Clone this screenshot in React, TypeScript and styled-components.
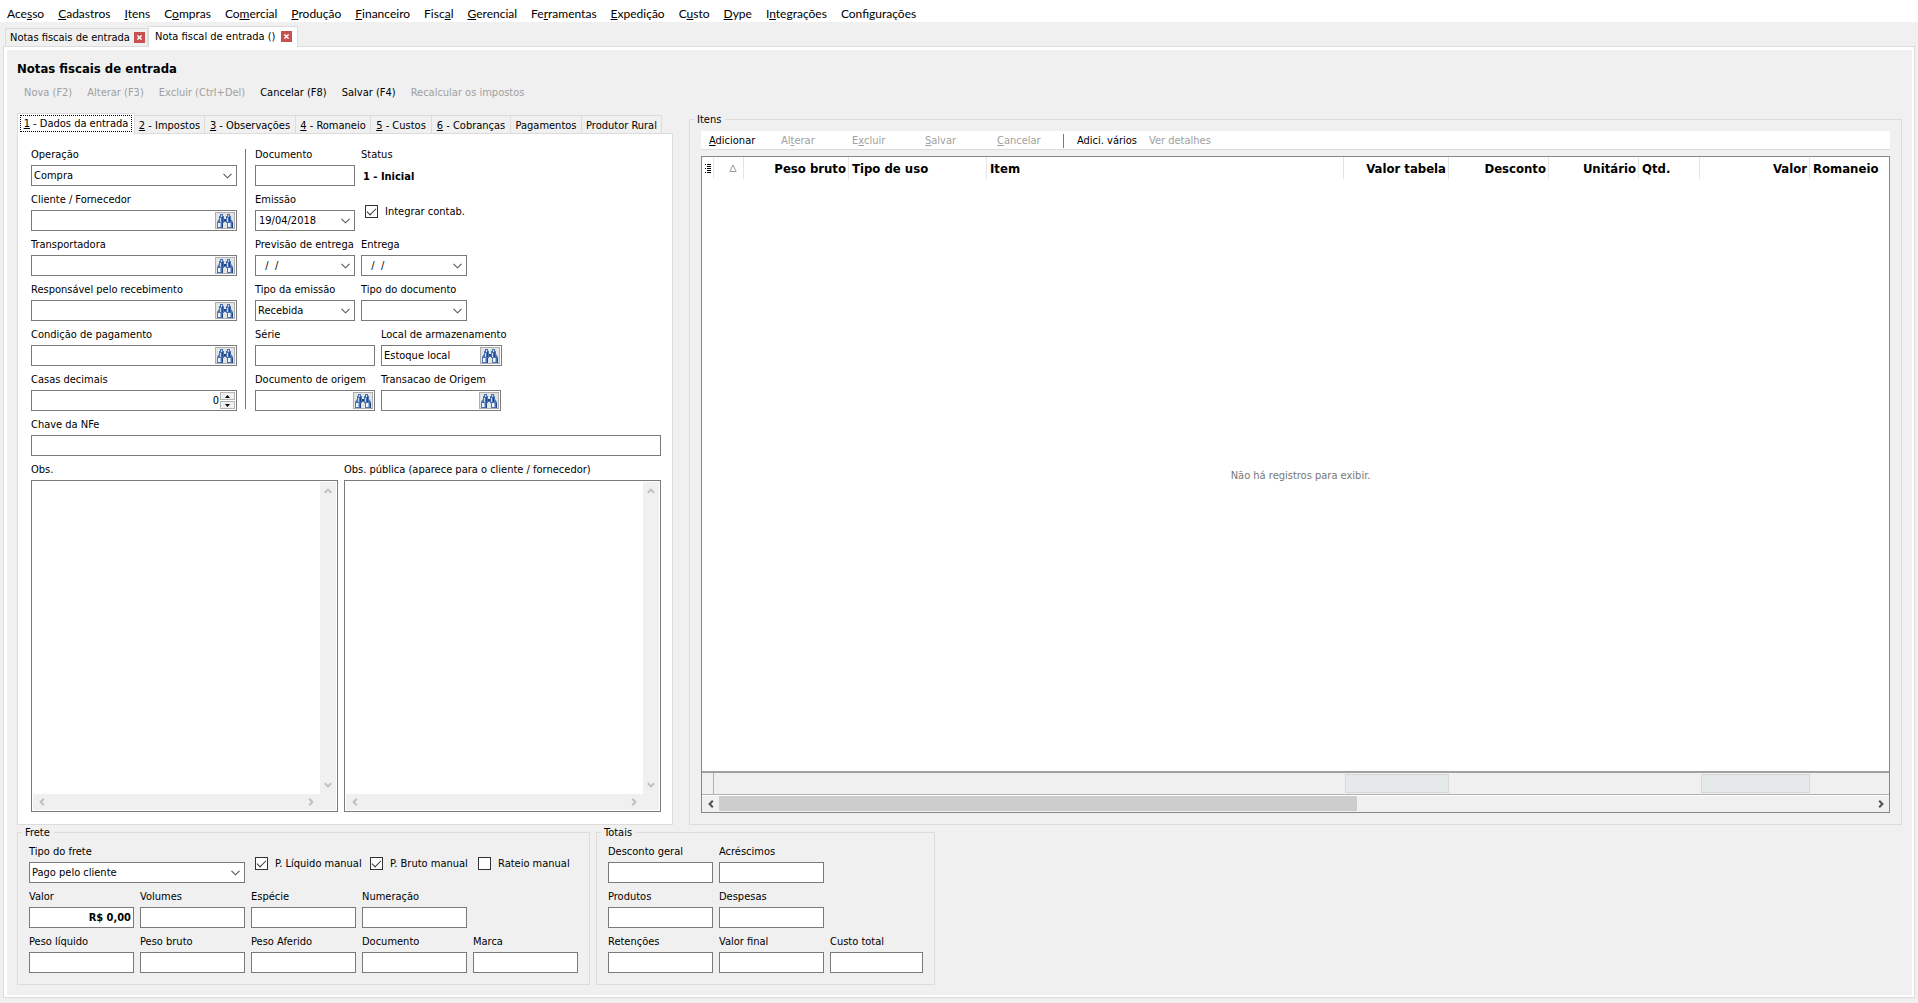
import React, { useId } from 'react';
import styled, { createGlobalStyle, css } from 'styled-components';

const FACE = '#f0f0f0';
const LINE = '#dcdcdc';
const EDGE = '#7a7a7a';
const MUTED = '#a0a0a0';

const GlobalStyle = createGlobalStyle`
  *, *::before, *::after { box-sizing: border-box; }
  body { margin: 0; background: ${FACE}; color: #000; }
  body, button, input, select, textarea {
    font-family: 'DejaVu Sans Condensed', 'DejaVu Sans', sans-serif;
    font-size: 11px;
    line-height: 13px;
  }
  button, input, select, textarea {
    margin: 0;
    padding: 0;
    border: 0;
    border-radius: 0;
    outline: none;
    background: transparent;
    color: inherit;
  }
`;

const Page = styled.div`
  display: flex;
  flex-direction: column;
  min-width: 1240px;
  min-height: 100vh;
  background: ${FACE};
`;

/* ---------- menu bar ---------- */

const MenuBar = styled.nav`
  display: flex;
  gap: 14px;
  height: 22px;
  padding: 5px 7px 0;
  background: #fff;
`;

const MenuItem = styled.button`
  font-family: Lato, 'Open Sans', sans-serif;
  font-size: 12px;
  line-height: 17px;
  white-space: nowrap;
`;

/* ---------- document tabs ---------- */

const DocTabs = styled.div`
  display: flex;
  align-items: flex-end;
  height: 24px;
  padding-left: 5px;
`;

const DocTab = styled.div<{ $active?: boolean }>`
  display: flex;
  align-items: center;
  justify-content: space-between;
  width: ${(p) => (p.$active ? 150 : 143)}px;
  height: 18px;
  padding: 0 2px 0 4px;
  border: 1px solid ${LINE};
  border-bottom: 0;
  background: ${FACE};
  white-space: nowrap;
  ${(p) =>
    p.$active &&
    css`
      z-index: 1;
      height: 21px;
      margin-bottom: -1px;
      padding: 0 5px 2px 6px;
      background: #fff;
    `}
`;

const CloseButton = styled.button`
  display: grid;
  place-items: center;
  width: 11px;
  height: 11px;
  background: #c75050;
`;

/* ---------- frame ---------- */

const Frame = styled.main`
  display: flex;
  flex: 1;
  flex-direction: column;
  margin: 0 3px 5px;
  padding: 3px 2px 2px 3px;
  border: 1px solid ${LINE};
  background: #fff;
`;

const Surface = styled.div`
  display: flex;
  flex: 1;
  flex-direction: column;
  padding: 11px 10px 10px;
  background: ${FACE};
`;

const Title = styled.h1`
  margin: 0;
  font-size: 13px;
  line-height: 16px;
`;

const Commands = styled.div`
  display: flex;
  gap: 15px;
  margin: 8px 0 12px;
  padding-left: 7px;
`;

const Command = styled.button`
  line-height: 16px;
  white-space: nowrap;
  &:disabled { color: ${MUTED}; }
`;

const Body = styled.div`
  display: grid;
  flex: 1;
  grid-template-columns: 656px minmax(0, 1fr);
  gap: 16px;
  margin-bottom: 1px;
`;

/* ---------- entry form tabs ---------- */

const EntryColumn = styled.section`
  display: flex;
  flex-direction: column;
`;

const FormTabs = styled.div`
  display: grid;
  grid-template-columns: 118px 70px 91px 75px 61px 79px 71px 80px;
  align-items: end;
  height: 20px;
`;

const FormTab = styled.button<{ $active?: boolean }>`
  height: 18px;
  padding-top: 2px;
  border: 1px solid ${LINE};
  border-width: 1px 1px 0 0;
  white-space: nowrap;
  ${(p) =>
    p.$active &&
    css`
      z-index: 1;
      height: 21px;
      margin-bottom: -1px;
      padding: 1px 2px 2px;
      border-width: 1px 1px 0 1px;
      background: #fff;
    `}
`;

const FocusRing = styled.span`
  display: block;
  border: 1px dotted #000;
  line-height: 15px;
`;

const Panel = styled.div`
  display: flex;
  flex: 1;
  flex-direction: column;
  gap: 6px;
  padding: 13px 11px 12px 13px;
  border: 1px solid ${LINE};
  background: #fff;
`;

const Upper = styled.div`
  display: flex;
`;

const Stack = styled.div<{ $width?: number }>`
  display: flex;
  flex-direction: column;
  gap: 6px;
  width: ${(p) => (p.$width ? p.$width + 'px' : 'auto')};
`;

const Rule = styled.div`
  width: 1px;
  margin: 2px 9px 2px 8px;
  background: ${EDGE};
`;

const Row = styled.div<{ $cols: string }>`
  display: grid;
  grid-template-columns: ${(p) => p.$cols};
  gap: 6px;
`;

const NotesRow = styled(Row)`
  flex: 1;
`;

/* ---------- fields ---------- */

const FieldBox = styled.div`
  display: flex;
  flex-direction: column;
  gap: 3px;
  min-width: 0;
`;

const Caption = styled.label`
  line-height: 15px;
  white-space: nowrap;
`;

const Box = styled.div`
  display: flex;
  height: 21px;
  padding: 1px;
  border: 1px solid ${EDGE};
  background: #fff;
`;

const TextInput = styled.input<{ $money?: boolean; $right?: boolean }>`
  flex: 1;
  width: 0;
  min-width: 0;
  padding: 0 1px;
  text-align: ${(p) => (p.$money || p.$right ? 'right' : 'left')};
  font-weight: ${(p) => (p.$money ? 700 : 400)};
`;

const DateInput = styled(TextInput)`
  padding-left: 2px;
  white-space: pre;
`;

const SelectWrap = styled.div`
  display: grid;
  flex: 1;
  & > * { grid-area: 1 / 1; }
  & > svg {
    align-self: center;
    justify-self: end;
    margin-right: 3px;
    pointer-events: none;
  }
`;

const Select = styled.select`
  width: 100%;
  padding: 0 18px 0 1px;
  appearance: none;
`;

const DropButton = styled.button`
  display: grid;
  place-items: center;
  width: 15px;
`;

const SearchButton = styled.button`
  display: grid;
  place-items: center;
  width: 20px;
  border: 1px solid #adadad;
  background: #e4e4e4;
`;

const Spinner = styled.div`
  display: grid;
  grid-template-rows: 1fr 1fr;
  gap: 1px;
  width: 15px;
`;

const SpinButton = styled.button`
  display: grid;
  place-items: center;
  border: 1px solid #b4b4b4;
  background: ${FACE};
`;

const StatusText = styled.output`
  padding: 5px 2px 3px;
  font-weight: 700;
`;

const CheckLabel = styled.label`
  display: flex;
  align-items: center;
  gap: 7px;
  white-space: nowrap;
`;

const CheckSlot = styled.div`
  display: flex;
  padding-left: 4px;
`;

const Check = styled.input`
  display: grid;
  flex: none;
  place-items: center;
  width: 13px;
  height: 13px;
  border: 1px solid #333;
  background: #fff;
  appearance: none;
  &:checked::after {
    content: '';
    width: 9px;
    height: 5px;
    margin-bottom: 3px;
    border: solid #333;
    border-width: 0 0 1px 1px;
    transform: rotate(-45deg);
  }
`;

/* ---------- notes ---------- */

const NotesField = styled(FieldBox)`
  flex: 1;
`;

const NotesBox = styled.div`
  display: grid;
  flex: 1;
  grid-template: minmax(150px, 1fr) 16px / 1fr 16px;
  padding: 1px;
  border: 1px solid ${EDGE};
  background: #fff;
`;

const NotesArea = styled.textarea`
  resize: none;
`;

const Bar = styled.div<{ $vertical?: boolean }>`
  display: flex;
  flex-direction: ${(p) => (p.$vertical ? 'column' : 'row')};
  align-items: center;
  justify-content: space-between;
  padding: ${(p) => (p.$vertical ? '5px 0' : '0 5px')};
  background: ${FACE};
`;

const Corner = styled.div`
  background: ${FACE};
`;

/* ---------- group boxes ---------- */

const Group = styled.fieldset`
  display: flex;
  flex-direction: column;
  gap: 6px;
  min-width: 0;
  margin: 0;
  padding: 5px 11px 11px;
  border: 1px solid ${LINE};
`;

const Legend = styled.legend`
  margin-left: -7px;
  padding: 0 4px 0 3px;
  line-height: 13px;
`;

const Groups = styled.div`
  display: flex;
  gap: 6px;
`;

const FreightRow = styled.div`
  display: grid;
  grid-template-columns: 216px 105px 98px auto;
  gap: 10px;
`;

/* ---------- items ---------- */

const ItemsBar = styled.div`
  display: grid;
  grid-template-columns: 72px 71px 73px 72px 66px 14px 72px auto;
  justify-content: start;
  align-items: center;
  height: 19px;
  padding: 2px 0 0 8px;
  border-bottom: 1px solid ${LINE};
  background: #fff;
`;

const ItemsCommand = styled(Command)`
  text-align: left;
`;

const BarRule = styled.div`
  width: 1px;
  height: 14px;
  background: ${EDGE};
`;

const GridFrame = styled.div`
  display: flex;
  flex: 1;
  flex-direction: column;
  border: 1px solid #828790;
  background: #fff;
`;

const Table = styled.table`
  display: flex;
  flex: 1;
  flex-direction: column;
`;

const Head = styled.thead`
  display: block;
`;

const TableBody = styled.tbody`
  display: grid;
  flex: 1;
`;

const Foot = styled.tfoot`
  display: block;
  border-top: 2px solid ${MUTED};
  border-bottom: 1px solid #b0b0b0;
  background: ${FACE};
`;

const GridRow = styled.tr`
  display: grid;
  grid-template-columns: 12px 30px 105px 138px minmax(60px, 1fr) 105px 100px 90px 61px 110px 79px;
  height: 22px;
`;

const FootRow = styled(GridRow)`
  height: 21px;
`;

const HeadCell = styled.th<{ $right?: boolean; $last?: boolean }>`
  padding: 3px 2px 0 3px;
  border-right: 1px solid ${(p) => (p.$last ? 'transparent' : '#e5e5e5')};
  font-size: 13px;
  line-height: 18px;
  text-align: ${(p) => (p.$right ? 'right' : 'left')};
  white-space: nowrap;
`;

const IconCell = styled(HeadCell)<{ $end?: boolean }>`
  display: flex;
  align-items: center;
  justify-content: ${(p) => (p.$end ? 'flex-end' : 'center')};
  padding: 0 ${(p) => (p.$end ? 6 : 0)}px 0 0;
`;

const EmptyRow = styled.tr`
  display: grid;
`;

const EmptyCell = styled.td`
  align-self: center;
  padding: 1px 0 0 10px;
  color: #777;
  text-align: center;
`;

const FootCell = styled.td<{ $sum?: boolean; $mark?: boolean }>`
  padding: 0;
  ${(p) =>
    p.$mark &&
    css`
      border-right: 1px solid #b0b0b0;
    `}
  ${(p) =>
    p.$sum &&
    css`
      margin: 1px 0 1px 1px;
      border: 1px solid #d6d8d8;
      background: #e5e9e9;
    `}
`;

const ScrollBar = styled.div`
  display: flex;
  height: 17px;
  border-top: 1px solid #fff;
  border-bottom: 1px solid ${FACE};
  background: ${FACE};
`;

const ScrollButton = styled.button`
  display: grid;
  flex: none;
  place-items: center;
  width: 17px;
`;

const Track = styled.div`
  display: grid;
  flex: 1;
  grid-template-columns: 31fr 25fr;
`;

const Thumb = styled.div`
  background: #cdcdcd;
`;

/* ---------- drawings ---------- */

const Chevron = () => (
  <svg width="9" height="6" viewBox="0 0 9 6" fill="none" stroke="#555" strokeWidth="1.1">
    <path d="M0.5 0.8 4.5 4.8 8.5 0.8" />
  </svg>
);

const arrowTurn = { up: 0, right: 90, down: 180, left: 270 };

const Arrow = ({ dir, dark }: { dir: keyof typeof arrowTurn; dark?: boolean }) => (
  <svg width="8" height="8" viewBox="0 0 8 8" fill="none" stroke={dark ? '#505050' : '#bfbfbf'} strokeWidth="2">
    <path d="M0.8 5.8 4 2.6 7.2 5.8" transform={`rotate(${arrowTurn[dir]} 4 4)`} />
  </svg>
);

const Binoculars = () => (
  <svg width="16" height="14" viewBox="0 0 16 14">
    <path d="M3 0h3v2h1v3h2V2h1V0h3v2h1v3l2 3v6h-6V9H9V8H7v1H6v5H0V8l2-3V2h1z" fill="#4a72b0" />
    <path d="M4 1h1v2H4zM3 4h1v4H3zM11 1h1v2h-1zM10 4h1v4h-1z" fill="#c6d8f2" />
    <path d="M1 9h2v4H1zM11 9h2v4h-2z" fill="#eef4fc" />
    <path d="M3 9h1v4H3zM13 9h1v4h-1z" fill="#9db9e0" />
    <path d="M5 3h1v5H5zM12 3h1v5h-1zM5 9h1v5H5zM15 9h1v5h-1zM7 5h2v2H7z" fill="#1f4689" />
  </svg>
);

const Cross = () => (
  <svg width="5" height="5" viewBox="0 0 5 5" stroke="#fff" strokeWidth="1.4">
    <path d="M0.4 0.4 4.6 4.6M4.6 0.4 0.4 4.6" />
  </svg>
);

const Triangle = ({ down }: { down?: boolean }) => (
  <svg width="5" height="3" viewBox="0 0 5 3">
    <path d={down ? 'M0 0h5L2.5 3z' : 'M0 3h5L2.5 0z'} fill="#000" />
  </svg>
);

const SortMark = () => (
  <svg width="8" height="8" viewBox="0 0 8 8" fill="none" stroke="#999">
    <path d="M4 1 7.2 7.5H0.8z" />
  </svg>
);

const ListMark = () => (
  <svg width="6" height="9" viewBox="0 0 6 9" fill="#000" shapeRendering="crispEdges">
    <path d="M0 0h1v1H0zM0 4h1v1H0zM0 8h1v1H0zM2 0h4v1H2zM2 2h4v1H2zM2 4h4v1H2zM2 6h4v1H2zM2 8h4v1H2z" />
  </svg>
);

/* ---------- parts ---------- */

/* The letter after "_" is the access key and is underlined. */
const Keyed = ({ text }: { text: string }) => {
  const at = text.indexOf('_');
  if (at < 0) return <>{text}</>;
  return (
    <>
      {text.slice(0, at)}
      <u>{text[at + 1]}</u>
      {text.slice(at + 2)}
    </>
  );
};

type FieldProps = { label: string; value?: string };

const Field = ({ label, value = '', money }: FieldProps & { money?: boolean }) => {
  const id = useId();
  return (
    <FieldBox>
      <Caption htmlFor={id}>{label}</Caption>
      <Box>
        <TextInput id={id} defaultValue={value} $money={money} />
      </Box>
    </FieldBox>
  );
};

const SearchField = ({ label, value = '' }: FieldProps) => {
  const id = useId();
  return (
    <FieldBox>
      <Caption htmlFor={id}>{label}</Caption>
      <Box>
        <TextInput id={id} defaultValue={value} />
        <SearchButton type="button" aria-label={'Pesquisar ' + label}>
          <Binoculars />
        </SearchButton>
      </Box>
    </FieldBox>
  );
};

const SelectField = ({ label, value = '' }: FieldProps) => {
  const id = useId();
  return (
    <FieldBox>
      <Caption htmlFor={id}>{label}</Caption>
      <Box>
        <SelectWrap>
          <Select id={id} defaultValue={value}>
            <option value={value}>{value}</option>
          </Select>
          <Chevron />
        </SelectWrap>
      </Box>
    </FieldBox>
  );
};

const DateField = ({ label, value = '' }: FieldProps) => {
  const id = useId();
  return (
    <FieldBox>
      <Caption htmlFor={id}>{label}</Caption>
      <Box>
        <DateInput id={id} defaultValue={value} />
        <DropButton type="button" aria-label={'Abrir ' + label}>
          <Chevron />
        </DropButton>
      </Box>
    </FieldBox>
  );
};

const NumberField = ({ label, value = '' }: FieldProps) => {
  const id = useId();
  return (
    <FieldBox>
      <Caption htmlFor={id}>{label}</Caption>
      <Box>
        <TextInput id={id} defaultValue={value} $right />
        <Spinner>
          <SpinButton type="button" aria-label="Aumentar">
            <Triangle />
          </SpinButton>
          <SpinButton type="button" aria-label="Diminuir">
            <Triangle down />
          </SpinButton>
        </Spinner>
      </Box>
    </FieldBox>
  );
};

const CheckField = ({ label, on }: { label: string; on?: boolean }) => (
  <CheckLabel>
    <Check type="checkbox" defaultChecked={on} />
    {label}
  </CheckLabel>
);

const Notes = ({ label }: { label: string }) => {
  const id = useId();
  return (
    <NotesField>
      <Caption htmlFor={id}>{label}</Caption>
      <NotesBox>
        <NotesArea id={id} />
        <Bar $vertical>
          <Arrow dir="up" />
          <Arrow dir="down" />
        </Bar>
        <Bar>
          <Arrow dir="left" />
          <Arrow dir="right" />
        </Bar>
        <Corner />
      </NotesBox>
    </NotesField>
  );
};

/* ---------- data ---------- */

const menu = [
  'Ace_sso', '_Cadastros', '_Itens', 'C_ompras', 'Co_mercial', '_Produção', '_Financeiro', 'Fisc_al',
  '_Gerencial', 'Fe_rramentas', '_Expedição', 'C_usto', '_Dype', 'I_ntegrações', 'Configurações',
];

const commands: [string, boolean][] = [
  ['Nova (F2)', false],
  ['Alterar (F3)', false],
  ['Excluir (Ctrl+Del)', false],
  ['Cancelar (F8)', true],
  ['Salvar (F4)', true],
  ['Recalcular os impostos', false],
];

const formTabs = [
  '_2 - Impostos', '_3 - Observações', '_4 - Romaneio', '_5 - Custos', '_6 - Cobranças', 'Pagamentos', 'Produtor Rural',
];

const columns: { name: string; right?: boolean; sum?: boolean }[] = [
  { name: 'Peso bruto', right: true },
  { name: 'Tipo de uso' },
  { name: 'Item' },
  { name: 'Valor tabela', right: true, sum: true },
  { name: 'Desconto', right: true },
  { name: 'Unitário', right: true },
  { name: 'Qtd.' },
  { name: 'Valor', right: true, sum: true },
  { name: 'Romaneio' },
];

/* ---------- sections ---------- */

const Entry = () => (
  <EntryColumn>
    <FormTabs role="tablist">
      <FormTab type="button" role="tab" aria-selected $active>
        <FocusRing>
          <Keyed text="_1 - Dados da entrada" />
        </FocusRing>
      </FormTab>
      {formTabs.map((t) => (
        <FormTab key={t} type="button" role="tab">
          <Keyed text={t} />
        </FormTab>
      ))}
    </FormTabs>
    <Panel>
      <Upper>
        <Stack $width={206}>
          <SelectField label="Operação" value="Compra" />
          <SearchField label="Cliente / Fornecedor" />
          <SearchField label="Transportadora" />
          <SearchField label="Responsável pelo recebimento" />
          <SearchField label="Condição de pagamento" />
          <NumberField label="Casas decimais" value="0" />
        </Stack>
        <Rule />
        <Stack>
          <Row $cols="100px 106px">
            <Field label="Documento" />
            <FieldBox>
              <Caption as="span">Status</Caption>
              <StatusText>1 - Inicial</StatusText>
            </FieldBox>
          </Row>
          <Row $cols="100px 106px">
            <DateField label="Emissão" value="19/04/2018" />
            <CheckSlot>
              <CheckField label="Integrar contab." on />
            </CheckSlot>
          </Row>
          <Row $cols="100px 106px">
            <DateField label="Previsão de entrega" value="  /  /" />
            <DateField label="Entrega" value="  /  /" />
          </Row>
          <Row $cols="100px 106px">
            <SelectField label="Tipo da emissão" value="Recebida" />
            <SelectField label="Tipo do documento" />
          </Row>
          <Row $cols="120px 121px">
            <Field label="Série" />
            <SearchField label="Local de armazenamento" value="Estoque local" />
          </Row>
          <Row $cols="120px 120px">
            <SearchField label="Documento de origem" />
            <SearchField label="Transacao de Origem" />
          </Row>
        </Stack>
      </Upper>
      <Field label="Chave da NFe" />
      <NotesRow $cols="307fr 317fr">
        <Notes label="Obs." />
        <Notes label="Obs. pública (aparece para o cliente / fornecedor)" />
      </NotesRow>
    </Panel>
  </EntryColumn>
);

const Items = () => (
  <Group>
    <Legend>Itens</Legend>
    <ItemsBar>
      <ItemsCommand type="button"><Keyed text="_Adicionar" /></ItemsCommand>
      <ItemsCommand type="button" disabled><Keyed text="Al_terar" /></ItemsCommand>
      <ItemsCommand type="button" disabled><Keyed text="E_xcluir" /></ItemsCommand>
      <ItemsCommand type="button" disabled><Keyed text="_Salvar" /></ItemsCommand>
      <ItemsCommand type="button" disabled><Keyed text="_Cancelar" /></ItemsCommand>
      <BarRule />
      <ItemsCommand type="button">Adici. vários</ItemsCommand>
      <ItemsCommand type="button" disabled>Ver detalhes</ItemsCommand>
    </ItemsBar>
    <GridFrame>
      <Table>
        <Head>
          <GridRow>
            <IconCell><ListMark /></IconCell>
            <IconCell $end><SortMark /></IconCell>
            {columns.map((c) => (
              <HeadCell key={c.name} $right={c.right} $last={c.name === 'Romaneio'}>
                {c.name}
              </HeadCell>
            ))}
          </GridRow>
        </Head>
        <TableBody>
          <EmptyRow>
            <EmptyCell>Não há registros para exibir.</EmptyCell>
          </EmptyRow>
        </TableBody>
        <Foot>
          <FootRow>
            <FootCell $mark />
            <FootCell />
            {columns.map((c) => (
              <FootCell key={c.name} $sum={c.sum} />
            ))}
          </FootRow>
        </Foot>
      </Table>
      <ScrollBar>
        <ScrollButton type="button" aria-label="Rolar para a esquerda">
          <Arrow dir="left" dark />
        </ScrollButton>
        <Track>
          <Thumb />
        </Track>
        <ScrollButton type="button" aria-label="Rolar para a direita">
          <Arrow dir="right" dark />
        </ScrollButton>
      </ScrollBar>
    </GridFrame>
  </Group>
);

const Freight = () => (
  <Group>
    <Legend>Frete</Legend>
    <FreightRow>
      <SelectField label="Tipo do frete" value="Pago pelo cliente" />
      <CheckField label="P. Líquido manual" on />
      <CheckField label="P. Bruto manual" on />
      <CheckField label="Rateio manual" />
    </FreightRow>
    <Row $cols="repeat(5, 105px)">
      <Field label="Valor" value="R$ 0,00" money />
      <Field label="Volumes" />
      <Field label="Espécie" />
      <Field label="Numeração" />
    </Row>
    <Row $cols="repeat(5, 105px)">
      <Field label="Peso líquido" />
      <Field label="Peso bruto" />
      <Field label="Peso Aferido" />
      <Field label="Documento" />
      <Field label="Marca" />
    </Row>
  </Group>
);

const Totals = () => (
  <Group>
    <Legend>Totais</Legend>
    <Row $cols="105px 105px 93px">
      <Field label="Desconto geral" />
      <Field label="Acréscimos" />
    </Row>
    <Row $cols="105px 105px 93px">
      <Field label="Produtos" />
      <Field label="Despesas" />
    </Row>
    <Row $cols="105px 105px 93px">
      <Field label="Retenções" />
      <Field label="Valor final" />
      <Field label="Custo total" />
    </Row>
  </Group>
);

export default function App() {
  return (
    <Page>
      <GlobalStyle />
      <MenuBar>
        {menu.map((m) => (
          <MenuItem key={m} type="button">
            <Keyed text={m} />
          </MenuItem>
        ))}
      </MenuBar>
      <DocTabs>
        <DocTab>
          <button type="button">Notas fiscais de entrada</button>
          <CloseButton type="button" aria-label="Fechar"><Cross /></CloseButton>
        </DocTab>
        <DocTab $active>
          <button type="button">Nota fiscal de entrada ()</button>
          <CloseButton type="button" aria-label="Fechar"><Cross /></CloseButton>
        </DocTab>
      </DocTabs>
      <Frame>
        <Surface>
          <Title>Notas fiscais de entrada</Title>
          <Commands>
            {commands.map(([name, on]) => (
              <Command key={name} type="button" disabled={!on}>
                {name}
              </Command>
            ))}
          </Commands>
          <Body>
            <Entry />
            <Items />
          </Body>
          <Groups>
            <Freight />
            <Totals />
          </Groups>
        </Surface>
      </Frame>
    </Page>
  );
}
